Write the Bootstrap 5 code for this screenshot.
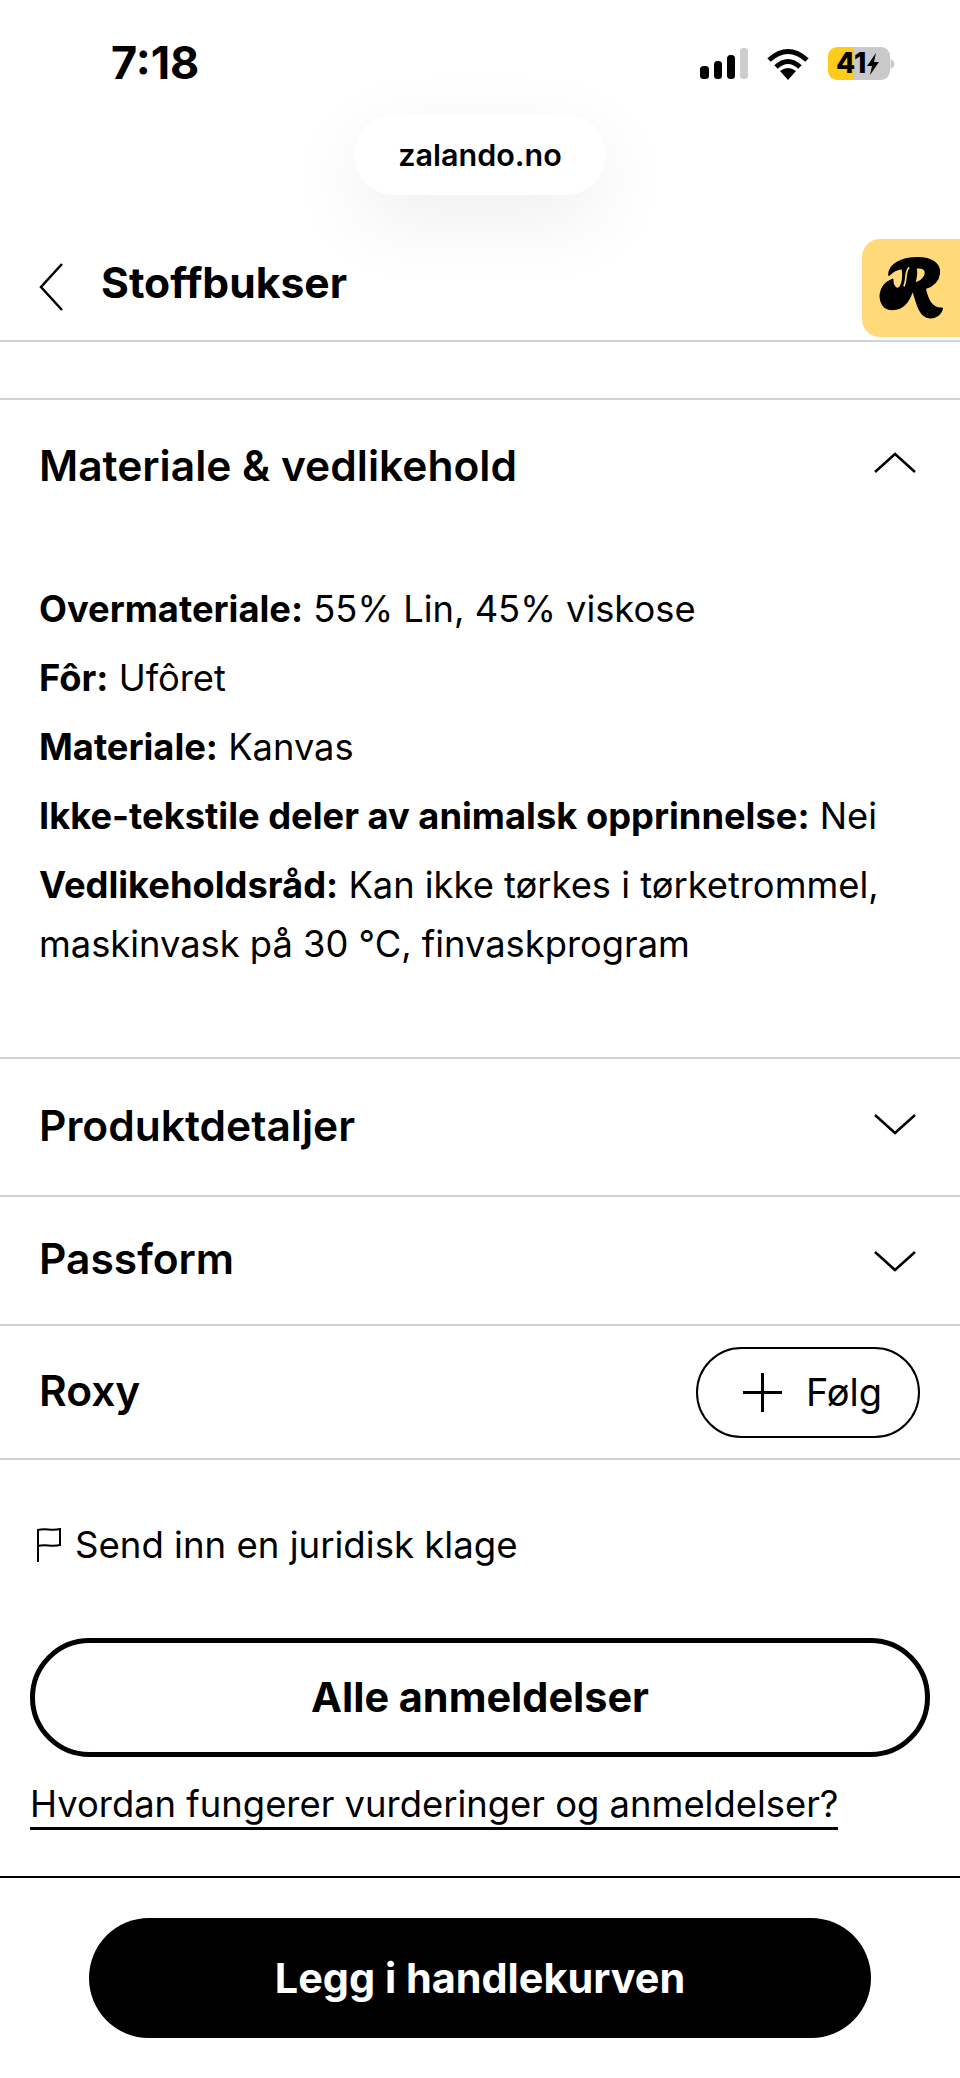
<!DOCTYPE html>
<html lang="no">
<head>
    <meta charset="UTF-8">
    <link href="https://cdn.jsdelivr.net/npm/bootstrap@5.3.0/dist/css/bootstrap.min.css" rel="stylesheet">
    <style>
        body { font-family: Inter, "Liberation Sans", sans-serif; color: #000; background: #fff; width: 960px; }

        /* iOS-statuslinje */
        .status-row { height: 115px; padding: 41px 65px 0 111px; }
        .status-time { font-size: 45px; font-weight: 700; line-height: 44px; }
        .status-icons { gap: 19px; margin-top: 6px; }
        .batt-box { width: 62px; height: 33px; border-radius: 9px; background: linear-gradient(90deg, #fccb1c 0 26px, #c9c9c9 26px); font-size: 28px; font-weight: 800; line-height: 33px; padding-left: 8px; }

        /* Adressefelt */
        .url-row { height: 124px; }
        .url-pill { width: 252px; height: 80px; border-radius: 40px; background: #fff; font-size: 30.5px; font-weight: 600; box-shadow: 0 24px 80px rgba(0,0,0,.07); }

        .page-head { height: 103px; border-bottom: 2px solid #d1d3da; padding: 0 0 6px 39px; }
        .page-title { font-size: 42.6px; font-weight: 700; margin: 0 0 8px 38px; }
        .r-badge { width: 98px; height: 98px; background: #ffd97a; border-radius: 18px 0 0 18px; }
        .gap-band { height: 58px; border-bottom: 2px solid #d1d3da; }

        .acc-row { border-bottom: 2px solid #d1d3da; padding: 0 44px 0 39px; font-size: 42.5px; font-weight: 600; }
        .acc-open { height: 132px; border-bottom: 0; }
        .acc-body { padding: 48px 39px 83px; border-bottom: 2px solid #d1d3da; font-size: 36.3px; line-height: 59px; }
        .acc-body p { margin-bottom: 10px; }
        .acc-body p:last-child { margin-bottom: 0; }
        .acc-body b { font-weight: 700; }
        .h-prod { height: 138px; }
        .h-pass { height: 129px; }
        .h-brand { height: 134px; padding-right: 40px; }
        .chev-shift { margin-bottom: 6px; }
        .lift-text { margin-bottom: 3px; }

        .follow-btn { width: 224px; height: 91px; border: 2px solid #000; border-radius: 46px; font-size: 38px; font-weight: 400; background: #fff; color: #000; padding: 0 0 0 9px; gap: 24px; }
        .klage-row { height: 178px; padding: 0 0 8px 37px; font-size: 36.6px; gap: 14px; }

        .review-btn { display: block; width: 900px; height: 119px; margin-left: 30px; border: 5px solid #000; border-radius: 60px; background: #fff; color: #000; font-size: 41.4px; font-weight: 700; }
        .how-link { display: inline-block; margin: 24px 0 0 30px; color: #000; font-size: 36.4px; line-height: 46px; text-decoration: none; border-bottom: 3px solid #000; }
        .cart-band { margin-top: 46px; border-top: 2px solid #000; padding-top: 40px; height: 201px; }
        .cart-btn { display: block; width: 782px; height: 120px; margin: 0 auto; border: 0; border-radius: 60px; background: #000; color: #fff; font-size: 41.4px; font-weight: 700; }
    </style>
</head>
<body>
    <div class="status-row d-flex justify-content-between align-items-start">
        <div class="status-time">7:18</div>
        <div class="status-icons d-flex align-items-center">
            <svg width="48" height="32" viewBox="0 0 48 32">
                <rect x="0" y="18" width="9" height="13" rx="3.5"/>
                <rect x="14" y="13" width="8" height="18" rx="3.5"/>
                <rect x="27" y="7" width="8" height="24" rx="3.5"/>
                <rect x="40" y="0" width="8" height="31" rx="3.5" fill="#cdcdcd"/>
            </svg>
            <svg width="42" height="32" viewBox="0 0 42 32">
                <path d="M2 12 Q21 -5 40 12 M9 19 Q21 8 33 19" fill="none" stroke="#000" stroke-width="5"/>
                <path d="M13 23 Q21 17 29 23 L21 32 Z"/>
            </svg>
            <div class="d-flex align-items-center">
                <div class="batt-box d-flex">41<svg width="14" height="33" viewBox="0 0 14 33"><path d="M10 6 L1 19 H6 L4 28 L13 15 H8 Z"/></svg></div>
                <svg width="5" height="10" viewBox="0 0 4 10"><path d="M0 0 Q4 2 4 5 Q4 8 0 10 Z" fill="#c9c9c9"/></svg>
            </div>
        </div>
    </div>

    <div class="url-row d-flex justify-content-center align-items-start">
        <div class="url-pill d-flex justify-content-center align-items-center">zalando.no</div>
    </div>

    <div class="page-head d-flex align-items-center">
        <svg width="24" height="48" viewBox="0 0 24 48"><path d="M23 1 L2 24 L23 47" fill="none" stroke="#000" stroke-width="2.5"/></svg>
        <div class="page-title">Stoffbukser</div>
        <div class="r-badge ms-auto align-self-start d-flex justify-content-center align-items-center">
            <svg width="64" height="62" viewBox="120 85 190 184">
                <path d="M150 138 C150 105 190 88 235 88 C275 88 302 105 298 135 C295 160 275 172 256 178 C262 205 272 240 307 238 C302 258 285 266 268 264 C238 260 232 215 220 180 C210 215 190 240 160 240 C135 240 122 220 125 195 C127 175 142 160 160 152 C160 165 165 178 175 180 C188 178 195 150 190 118 C170 120 158 128 150 138 Z" stroke="#000" stroke-width="6" stroke-linejoin="round"/>
                <path d="M232 120 C250 116 260 126 254 140 C248 152 238 157 229 159 C233 145 235 132 232 120 Z" fill="#ffd97a"/>
                <path d="M210 116 C196 124 204 150 194 172" fill="none" stroke="#ffd97a" stroke-width="5"/>
            </svg>
        </div>
    </div>
    <div class="gap-band"></div>

    <div class="acc-row acc-open d-flex justify-content-between align-items-center">
        <span>Materiale &amp; vedlikehold</span>
        <svg class="chev-shift" width="42" height="22" viewBox="0 0 42 22"><path d="M1 20 L21 2 L41 20" fill="none" stroke="#000" stroke-width="2.5"/></svg>
    </div>
    <div class="acc-body">
        <p><b>Overmateriale:</b> 55% Lin, 45% viskose</p>
        <p><b>Fôr:</b> Ufôret</p>
        <p><b>Materiale:</b> Kanvas</p>
        <p><b>Ikke-tekstile deler av animalsk opprinnelse:</b> Nei</p>
        <p><b>Vedlikeholdsråd:</b> Kan ikke tørkes i tørketrommel, maskinvask på 30 °C, finvaskprogram</p>
    </div>
    <div class="acc-row h-prod d-flex justify-content-between align-items-center">
        <span class="lift-text">Produktdetaljer</span>
        <svg class="chev-shift" width="42" height="22" viewBox="0 0 42 22"><path d="M1 2 L21 20 L41 2" fill="none" stroke="#000" stroke-width="2.5"/></svg>
    </div>
    <div class="acc-row h-pass d-flex justify-content-between align-items-center">
        <span class="lift-text">Passform</span>
        <svg width="42" height="22" viewBox="0 0 42 22"><path d="M1 2 L21 20 L41 2" fill="none" stroke="#000" stroke-width="2.5"/></svg>
    </div>
    <div class="acc-row h-brand d-flex justify-content-between align-items-center">
        <span class="lift-text">Roxy</span>
        <button class="follow-btn btn d-flex justify-content-center align-items-center">
            <svg width="39" height="39" viewBox="0 0 39 39"><path d="M0 19.5 H39 M19.5 0 V39" stroke="#000" stroke-width="3"/></svg>
            <span>Følg</span>
        </button>
    </div>

    <div class="klage-row d-flex align-items-center">
        <svg width="24" height="34" viewBox="0 0 24 34"><path d="M1 34 V2 C8 0 15 3 23 1 V17 C15 19 8 16 1 18" fill="none" stroke="#000" stroke-width="2"/></svg>
        <span>Send inn en juridisk klage</span>
    </div>

    <button class="review-btn btn p-0">Alle anmeldelser</button>
    <a class="how-link" href="#">Hvordan fungerer vurderinger og anmeldelser?</a>

    <div class="cart-band">
        <button class="cart-btn btn p-0">Legg i handlekurven</button>
    </div>

    <script src="https://cdn.jsdelivr.net/npm/bootstrap@5.3.0/dist/js/bootstrap.bundle.min.js"></script>
</body>
</html>
